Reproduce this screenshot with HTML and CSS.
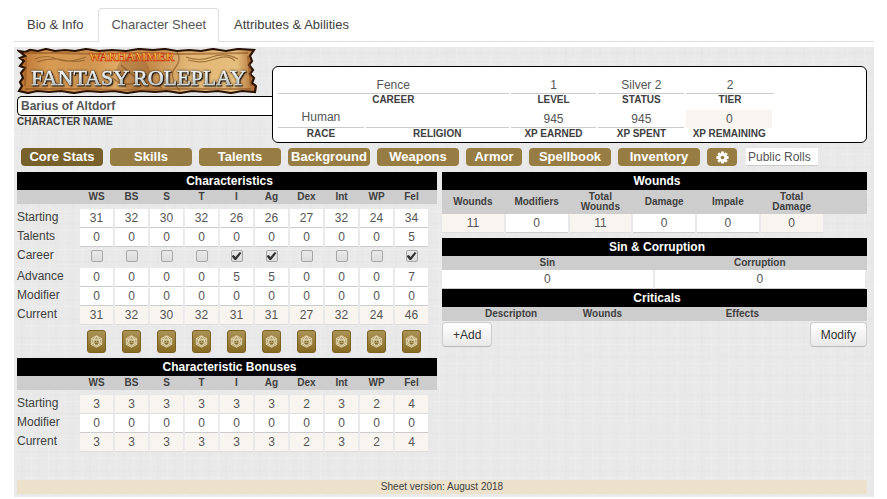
FILE: index.html
```html
<!DOCTYPE html>
<html lang="en">
<head>
<meta charset="utf-8">
<title>Character Sheet</title>
<link rel="stylesheet" href="styles.css">
</head>
<body>
<nav class="tabs" aria-label="Character">
  <a class="tab" href="#bio">Bio &amp; Info</a>
  <a class="tab tab-active" href="#sheet" aria-current="page">Character Sheet</a>
  <a class="tab" href="#attributes">Attributes &amp; Abilities</a>
</nav>

<main class="sheet" id="sheet">
  <header class="top">
    <div class="identity">
      <svg class="logo" viewBox="0 0 240 46" role="img" aria-label="Warhammer Fantasy Roleplay">
        <defs>
          <linearGradient id="parch" x1="0" y1="0" x2="1" y2="0">
            <stop offset="0" stop-color="#b8722f"/><stop offset=".12" stop-color="#d79b54"/>
            <stop offset=".3" stop-color="#cf9450"/><stop offset=".42" stop-color="#dfab66"/>
            <stop offset=".55" stop-color="#c48a4a"/><stop offset=".72" stop-color="#e2b878"/>
            <stop offset=".92" stop-color="#e5bd7c"/><stop offset="1" stop-color="#a8632b"/>
          </linearGradient>
          <linearGradient id="steel" x1="0" y1="0" x2="0" y2="1">
            <stop offset=".2" stop-color="#ffffff"/><stop offset=".5" stop-color="#dfe5e5"/><stop offset="1" stop-color="#7d908f"/>
          </linearGradient>
          <linearGradient id="fire" x1="0" y1="0" x2="0" y2="1">
            <stop offset=".3" stop-color="#fbd93c"/><stop offset="1" stop-color="#e8641c"/>
          </linearGradient>
        </defs>
        <path d="M2 3 L8 4 13 2 21 3 29 1 38 3 48 2 58 3 69 1 82 3 95 2 109 3 122 1 136 2 148 1 160 3 172 2 184 3 196 1 209 3 221 1 237 2 233 8 235 13 232 17 236 22 233 26 237 30 235 35 239 38 238 44 225 43 214 45 201 43 189 44 175 43 163 45 150 43 138 44 124 43 110 45 97 43 84 44 70 43 57 45 44 43 32 44 20 43 11 45 2 43 5 38 3 34 6 30 4 25 8 20 3 18 7 13 3 10 8 8Z" fill="url(#parch)" stroke="#2a1305" stroke-width="2.2"/>
        <path d="M7 5 L40 5 80 6 120 5 165 6 231 5 M8 41 L60 41 110 42 160 41 234 41 M9 9 L8 38 M231 8 L234 38" fill="none" stroke="#8c4c1b" stroke-width="2" opacity=".55"/>
        <g fill="none" stroke="#8a5a26" stroke-width="1.2" opacity=".75">
          <path d="M18 11 Q30 6 40 11 T69 9 M20 14 Q34 9 46 12 T68 12"/>
          <path d="M169 9 Q182 14 195 9 T221 11 M171 12 Q184 16 198 11 T218 13"/>
        </g>
        <circle cx="116" cy="25" r="17" fill="#8a5226" opacity=".35"/>
        <path d="M96 30 Q104 39 118 35 T145 40 M160 4 Q165 12 158 20 T163 43 M104 17 L128 38" fill="none" stroke="#6f3b14" stroke-width="1.4" opacity=".5"/>
        <text class="logo-title" x="14" y="37">FANTASY</text>
        <text class="logo-title" x="116" y="37">ROLEPLAY</text>
        <text class="logo-small" x="72" y="13">WARHAMMER</text>
      </svg>
      <input class="name" id="name" value="Barius of Altdorf">
      <label class="caption name-caption" for="name">CHARACTER NAME</label>
    </div>
    <div class="profile">
      <div class="field career"><input id="career" value="Fence"><label class="caption" for="career">CAREER</label></div>
      <div class="field"><input id="level" value="1"><label class="caption" for="level">LEVEL</label></div>
      <div class="field"><input id="status" value="Silver 2"><label class="caption" for="status">STATUS</label></div>
      <div class="field tier"><input id="tier" value="2"><label class="caption" for="tier">TIER</label></div>
      <div class="field"><select id="race"><option>Human</option></select><label class="caption" for="race">RACE</label></div>
      <div class="field"><input id="religion" value=""><label class="caption" for="religion">RELIGION</label></div>
      <div class="field"><input id="earned" value="945"><label class="caption" for="earned">XP EARNED</label></div>
      <div class="field"><input id="spent" value="945"><label class="caption" for="spent">XP SPENT</label></div>
      <div class="field"><input id="remaining" value="0" readonly><label class="caption" for="remaining">XP REMAINING</label></div>
    </div>
  </header>

  <div class="sections">
    <button class="section section-active">Core Stats</button>
    <button class="section">Skills</button>
    <button class="section">Talents</button>
    <button class="section">Background</button>
    <button class="section">Weapons</button>
    <button class="section section-short">Armor</button>
    <button class="section">Spellbook</button>
    <button class="section">Inventory</button>
    <button class="section section-icon" aria-label="Settings">
      <svg class="gear" viewBox="0 0 14 14" aria-hidden="true">
        <g stroke="#fff" stroke-width="3"><path d="M7 .5V13.5M.5 7H13.5M2.4 2.4L11.6 11.6M11.6 2.4L2.4 11.6"/></g>
        <circle cx="7" cy="7" r="4.8" fill="#fff"/><circle cx="7" cy="7" r="2" fill="#977d43"/>
      </svg>
    </button>
    <select class="rolls" aria-label="Roll visibility"><option>Public Rolls</option></select>
  </div>

  <div class="columns">
    <div class="left">
      <h2 class="bar">Characteristics</h2>
      <table class="stats" id="characteristics"></table>
      <h2 class="bar">Characteristic Bonuses</h2>
      <table class="stats" id="bonuses"></table>
    </div>
    <div class="right">
      <h2 class="bar">Wounds</h2>
      <table class="wounds">
        <thead><tr><th>Wounds</th><th>Modifiers</th><th>Total<br>Wounds</th><th>Damage</th><th>Impale</th><th>Total<br>Damage</th><th class="rest"></th></tr></thead>
        <tbody><tr>
          <td><input value="11" readonly aria-label="Wounds"></td>
          <td><input value="0" aria-label="Modifiers"></td>
          <td><input value="11" readonly aria-label="Total wounds"></td>
          <td><input value="0" aria-label="Damage"></td>
          <td><input value="0" aria-label="Impale"></td>
          <td><input value="0" readonly aria-label="Total damage"></td>
          <td></td>
        </tr></tbody>
      </table>
      <h2 class="bar">Sin &amp; Corruption</h2>
      <table>
        <thead><tr><th>Sin</th><th>Corruption</th></tr></thead>
        <tbody><tr><td><input value="0" aria-label="Sin"></td><td><input value="0" aria-label="Corruption"></td></tr></tbody>
      </table>
      <h2 class="bar">Criticals</h2>
      <table class="criticals">
        <thead><tr><th class="description">Descripton</th><th class="critical-wounds">Wounds</th><th>Effects</th><th class="rest"></th></tr></thead>
      </table>
      <div class="actions"><button class="plain">+Add</button><button class="plain">Modify</button></div>
    </div>
  </div>

  <footer class="version">Sheet version: August 2018</footer>
</main>
<script src="sheet.js"></script>
</body>
</html>
```
FILE: styles.css
```css
* { box-sizing: border-box; }

body {
  margin: 0;
  padding: 8px 13px 0 14px;
  background: #fff;
  color: #404040;
  font: 12px/18px "Liberation Sans", Arial, sans-serif;
}

input, select, button { font: inherit; color: inherit; margin: 0; padding: 0; border: 0; border-radius: 0; }

.tabs { display: flex; gap: 2px; height: 34px; border-bottom: 1px solid #ddd; }
.tab {
  height: 34px;
  padding: 0 12px;
  border: 1px solid transparent;
  border-radius: 4px 4px 0 0;
  color: #404040;
  font-size: 13px;
  line-height: 32px;
  text-decoration: none;
}
.tab-active { background: #fff; border-color: #ddd; border-bottom-color: #fff; color: #555; }

.sheet {
  margin-top: 5px;
  padding: 1px 7px 3px 3px;
  background-color: #e9e9e9;
  background-image:
    repeating-linear-gradient(90deg, rgba(255,255,255,.14) 0 1px, transparent 1px 7px, rgba(0,0,0,.006) 7px 9px, transparent 9px 17px),
    repeating-linear-gradient(0deg, rgba(255,255,255,.14) 0 1px, transparent 1px 6px, rgba(0,0,0,.006) 6px 8px, transparent 8px 19px);
}

.top { display: flex; }
.identity { width: 30%; }
.logo { display: block; width: 240px; max-width: 100%; height: 46px; }
.logo-title {
  font: 22px "Liberation Serif", serif;
  fill: url(#steel);
  stroke: #e4eaea;
  stroke-width: .5px;
  filter: drop-shadow(1px 1px 0 #2c2117) drop-shadow(0 0 1px #2c2117);
}
.logo-small { font: bold 12px "Liberation Serif", serif; fill: url(#fire); stroke: #c3280f; stroke-width: .5px; }

.caption { display: block; font-size: 10px; font-weight: bold; line-height: 12px; text-align: center; white-space: nowrap; }
.name {
  display: block;
  width: 100%;
  height: 20px;
  margin-top: 2px;
  padding: 0 3px;
  background: #fff;
  border: 1px solid #000;
  border-right: 0;
  border-radius: 5px 0 0 5px;
  color: #555;
  font-weight: bold;
}
.name-caption { text-align: left; }

.profile {
  flex: 1;
  display: grid;
  grid-template-columns: 86fr 143fr 86fr 86fr 86fr 87fr;
  gap: 2px;
  height: 77px;
  margin-top: 18px;
  padding: 9px 5px 0;
  background: #fff;
  border: 1px solid #000;
  border-radius: 6px;
}
.career { grid-column: span 2; }
.tier { grid-column: 5 / span 2; width: 50%; }
.field input, .field select {
  display: block;
  width: 100%;
  height: 18px;
  appearance: none;
  background: #fff;
  border-bottom: 1px solid #ccc;
  color: #555;
  text-align: center;
  text-align-last: center;
}
.field select { padding-bottom: 3px; line-height: 14px; }

.sections { display: flex; gap: 7px; margin: 5px 0 6px; padding-left: 4px; }
.section {
  width: 82px;
  height: 18px;
  background: #977d43;
  border-radius: 4px;
  color: #fff;
  font-size: 13px;
  font-weight: bold;
  line-height: 18px;
  text-align: center;
}
.section-active { background: #78602a; }
.section-short { width: 56px; }
.section-icon { width: 30px; display: flex; align-items: center; justify-content: center; }
.gear { width: 13px; height: 13px; }
.rolls { width: 72px; height: 18px; margin-left: 2px; padding-left: 2px; appearance: none; background: #fff; border-bottom: 1px solid #ccc; color: #555; }

.columns { display: grid; grid-template-columns: 420fr 425fr; gap: 5px; }
.bar { margin: 0; padding-left: 5px; background: #000; color: #fff; font-size: 12px; font-weight: bold; line-height: 18px; text-align: center; }

table { width: 100%; table-layout: fixed; border-collapse: collapse; }
th, td { padding: 0 2px 0 0; font-weight: normal; }
thead { background: #cdcdcd; }
thead th { height: 14px; font-size: 10px; font-weight: bold; line-height: 14px; text-align: center; }
td { text-align: center; }
td input { display: block; width: 100%; height: 19px; background: #fff; border-bottom: 1px solid #ccc; color: #555; text-align: center; }
input[readonly] { background: #f8f5f1; border-bottom-color: #ddd; }
.profile input[readonly] { border-bottom-color: #f8f5f1; }

.stats .row-name { width: 15%; }
.stats .rest { width: 7px; }
.stats tbody::before { content: ""; display: block; height: 5px; }
.stats tbody th { text-align: left; line-height: 16px; vertical-align: top; }
.stats tbody td { vertical-align: top; }
.check-row { height: 21px; }
.dice-row { height: 33px; }

.check {
  position: relative;
  appearance: none;
  width: 12px;
  height: 12px;
  margin: 3px auto 0;
  background: linear-gradient(#e8e8e8, #dcdcdc);
  border: 1px solid #a6a6a6;
  border-radius: 2px;
}
.check:checked::before {
  content: "";
  position: absolute;
  inset: 1px 0;
  background: #333;
  clip-path: polygon(0 50%, 22% 38%, 40% 62%, 82% 0, 100% 14%, 46% 100%, 30% 100%);
}

.dice {
  display: flex;
  align-items: center;
  justify-content: center;
  width: 19px;
  height: 23px;
  margin: 5px auto 0;
  background: linear-gradient(#ab9155, #876b23);
  border: 1px solid #7c6125;
  border-radius: 3px;
}
.die { width: 13px; height: 13px; }

.wounds { margin-bottom: 5px; }
.wounds th { width: 15%; height: 24px; line-height: 10px; }
.wounds .rest { width: 10%; }
.criticals .description { width: 33%; }
.criticals .critical-wounds { width: 10%; }
.criticals .rest { width: 5px; }

.actions { display: flex; justify-content: space-between; padding-top: 1px; }
.plain {
  height: 25px;
  padding: 0 10px;
  background: linear-gradient(#fff, #e8e8e8);
  border: 1px solid #ccc;
  border-bottom-color: #b8b8b8;
  border-radius: 4px;
  color: #333;
}

.version { margin: 28px 0 0; background: #ece1ca; font-size: 10px; line-height: 14px; text-align: center; }
```
FILE: sheet.js
```js
const stats = ["WS", "BS", "S", "T", "I", "Ag", "Dex", "Int", "WP", "Fel"];
const die = `<svg class="die" viewBox="0 0 14 14" aria-hidden="true">
  <path d="M7 .8L12.6 3.8V10.2L7 13.2L1.4 10.2V3.8Z" fill="#b5a16a" stroke="#e0d4ae" stroke-width="1"/>
  <path d="M4 5.2H10L11 9L7 11.6L3 9ZM1.6 4L4 5.2L7 1M12.4 4L10 5.2L7 1M3 9L1.6 10M11 9L12.4 10" fill="none" stroke="#f3ead0" stroke-width=".8"/>
  <path d="M5.2 7.2H6.4M7.6 7.2H8.8M5.4 9.4H8.6" stroke="#6e5725" stroke-width="1"/>
</svg>`;

const row = (name, cells, cls = "") =>
  `<tr class="${cls}"><th class="row-name" scope="row">${name}</th>${cells.map(c => `<td>${c}</td>`).join("")}<td></td></tr>`;

const numbers = (name, values, readonly) =>
  row(name, values.map((v, i) => `<input value="${v}" aria-label="${stats[i]} ${name}"${readonly ? " readonly" : ""}>`));

const head = `<thead><tr><th class="row-name"></th>${stats.map(s => `<th scope="col">${s}</th>`).join("")}<th class="rest"></th></tr></thead>`;
const zeros = stats.map(() => 0);
const career = [0, 0, 0, 0, 1, 1, 0, 0, 0, 1];

document.getElementById("characteristics").innerHTML = head + "<tbody>" +
  numbers("Starting", [31, 32, 30, 32, 26, 26, 27, 32, 24, 34]) +
  numbers("Talents", [0, 0, 0, 0, 0, 0, 0, 0, 0, 5]) +
  row("Career", career.map((c, i) => `<input class="check" type="checkbox" aria-label="${stats[i]} career"${c ? " checked" : ""}>`), "check-row") +
  numbers("Advance", [0, 0, 0, 0, 5, 5, 0, 0, 0, 7]) +
  numbers("Modifier", zeros) +
  numbers("Current", [31, 32, 30, 32, 31, 31, 27, 32, 24, 46], true) +
  row("", stats.map(s => `<button class="dice" aria-label="Roll ${s}">${die}</button>`), "dice-row") +
  "</tbody>";

const bonus = [3, 3, 3, 3, 3, 3, 2, 3, 2, 4];
document.getElementById("bonuses").innerHTML = head + "<tbody>" +
  numbers("Starting", bonus, true) +
  numbers("Modifier", zeros) +
  numbers("Current", bonus, true) +
  "</tbody>";
```
